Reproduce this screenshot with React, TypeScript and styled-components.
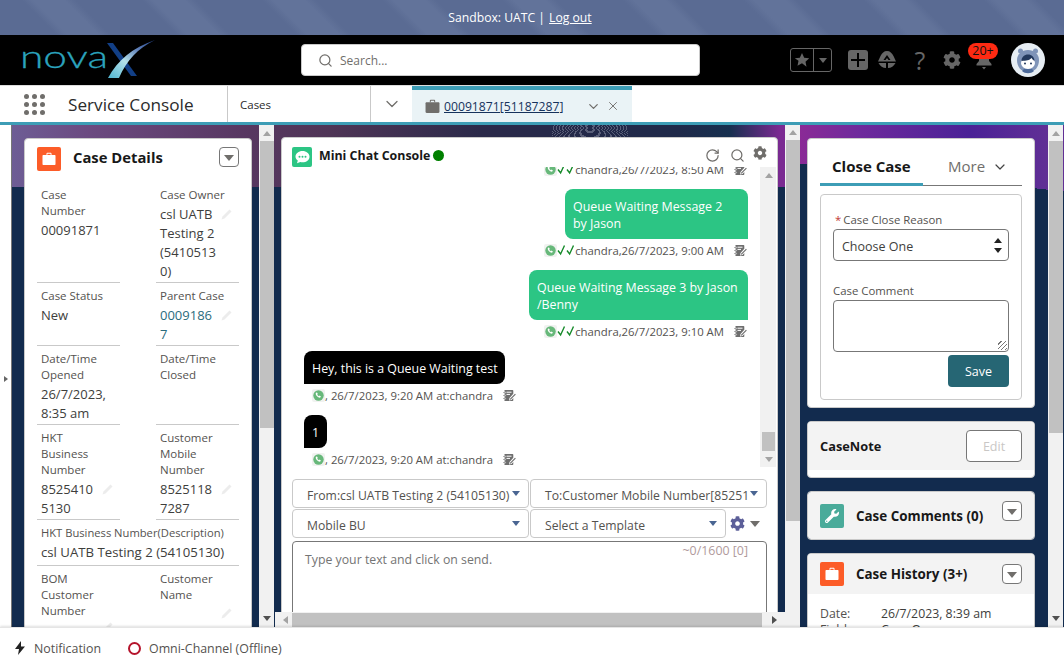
import React from 'react'
import styled, { createGlobalStyle } from 'styled-components'
import { FaCog, FaWrench } from 'react-icons/fa'
import { ChevronDown, RotateCw, Search, X } from 'lucide-react'

const FONT = `"Open Sans", "Noto Sans", "Liberation Sans", sans-serif`
const NAVY = '#122b4e'
const TEAL = '#3d9db6'

const Global = createGlobalStyle`
  * { box-sizing: border-box; }
  html, body { margin: 0; padding: 0; height: 100%; overflow: hidden; background: #fff; }
  body { font-family: ${FONT}; color: #3e3e3c; }
`

const Page = styled.div`
  display: flex;
  flex-direction: column;
  height: 668px;
  width: 1064px;
  overflow: hidden;
`

const Sandbox = styled.div`
  height: 35px;
  flex: none;
  display: flex;
  align-items: center;
  justify-content: center;
  gap: 4px;
  padding-right: 24px;
  color: #fff;
  font-size: 12.2px;
  background: repeating-linear-gradient(45deg, #5a6b93 0 40px, #62739a 48px 70px, #5a6b93 78px 85px);
  a { color: #fff; text-decoration: underline; }
`

const Header = styled.header`
  height: 50px;
  flex: none;
  background: #000;
  display: flex;
  align-items: center;
  padding: 0 19px 0 20px;
`

const Logo = styled.svg`
  width: 136px;
  height: 42px;
  flex: none;
`

const SearchBox = styled.div`
  width: 399px;
  height: 32px;
  margin-left: 145px;
  background: #fff;
  border: 1px solid #c9c9c9;
  border-radius: 4px;
  display: flex;
  align-items: center;
  gap: 7px;
  padding-left: 16px;
  color: #706e6b;
  font-size: 12px;
  flex: none;
`

const HeaderIcons = styled.div`
  display: flex;
  align-items: center;
  margin-left: 90px;
  flex: 1;
`

const Favorites = styled.div`
  width: 42px;
  height: 24px;
  border: 1px solid #666;
  border-radius: 3px;
  display: flex;
  flex: none;
  div { display: flex; align-items: center; justify-content: center; }
  div:first-child { width: 23px; border-right: 1px solid #666; }
  div:last-child { flex: 1; }
`

const PlusButton = styled.div`
  width: 20px;
  height: 20px;
  margin-left: 16px;
  background: #666;
  border-radius: 3px;
  display: flex;
  align-items: center;
  justify-content: center;
  flex: none;
`

const HeadIcon = styled.div<{ $ml: number }>`
  margin-left: ${p => p.$ml}px;
  display: flex;
  align-items: center;
  justify-content: center;
  position: relative;
  color: #666;
  flex: none;
`

const Help = styled.span`
  width: 14px;
  text-align: center;
  font-size: 25px;
  font-weight: 400;
  color: #666;
  line-height: 26px;
`

const Badge = styled.span`
  position: absolute;
  left: -6px;
  top: -8px;
  width: 30px;
  height: 16px;
  border-radius: 8px;
  background: #ff2a12;
  color: #111;
  font-size: 12.5px;
  line-height: 16px;
  text-align: center;
`

const Avatar = styled.svg`
  width: 34px;
  height: 34px;
  margin-left: 17px;
  flex: none;
`

const Nav = styled.nav`
  height: 40px;
  flex: none;
  display: flex;
  background: #fff;
  border-top: 1px solid #ddd;
  border-bottom: 3px solid ${TEAL};
`

const AppName = styled.div`
  width: 228px;
  height: 36px;
  display: flex;
  align-items: center;
  padding-left: 24px;
  gap: 23px;
  font-size: 17.2px;
  color: #2b2b2b;
  border-right: 1px solid #c9c9c9;
  flex: none;
`

const Launcher = styled.div`
  width: 21px;
  display: grid;
  grid-template-columns: repeat(3, 5px);
  gap: 3px;
  i { display: block; width: 5px; height: 5px; border-radius: 50%; background: #706e6b; }
`

const NavItem = styled.div`
  width: 143px;
  height: 36px;
  padding-left: 12px;
  display: flex;
  align-items: center;
  font-size: 11.5px;
  color: #2b2b2b;
  border-right: 1px solid #c9c9c9;
  flex: none;
`

const NavChevron = styled.div`
  width: 41px;
  height: 36px;
  display: flex;
  align-items: center;
  justify-content: center;
  color: #706e6b;
  flex: none;
`

const ActiveTab = styled.div`
  width: 220px;
  height: 36px;
  background: #eaf3f6;
  border-top: 4px solid ${TEAL};
  display: flex;
  align-items: center;
  padding-left: 13px;
  color: #706e6b;
  flex: none;
  a { margin-left: 4px; font-size: 12.2px; color: #16325c; text-decoration: underline; width: 142px; white-space: nowrap; }
  svg + svg { margin-left: 5px; }
`

const Workspace = styled.main`
  height: 502px;
  flex: none;
  display: flex;
  overflow: hidden;
  background:
    repeating-radial-gradient(ellipse 14px 4px at 38px 3px, rgba(225, 230, 240, .28) 0 1px, rgba(20, 30, 60, .12) 1px 3px) 552px 0 / 76px 13px no-repeat,
    linear-gradient(${NAVY}, ${NAVY}) 0 62px no-repeat,
    linear-gradient(90deg, #6e6098 0, #6b4a80 90px, #573760 250px, #4f3556 330px, #2b2a4a 480px, #1f2a4a 680px, #17304f 730px, #7b2a92 780px, #7b2a92 800px);
`

const SideToggle = styled.div`
  width: 12px;
  background: #fff;
  border-right: 1px solid #777;
  display: flex;
  align-items: center;
  padding-left: 4px;
  flex: none;
  &::after {
    content: '';
    border-left: 4px solid #666;
    border-top: 3px solid transparent;
    border-bottom: 3px solid transparent;
    margin-top: 6px;
  }
`

const LeftColumn = styled.section`
  width: 263px;
  padding: 13px 0 0 12px;
  display: flex;
  align-items: flex-start;
  overflow: hidden;
  flex: none;
`

const VTrack = styled.div<{ $ml: number }>`
  width: 15px;
  height: 502px;
  margin: -13px 0 0 ${p => p.$ml}px;
  background: #f1f1f1;
  display: flex;
  flex-direction: column;
  align-items: center;
  flex: none;
`

const UpArrow = styled.i`
  display: block;
  margin: 6px 0 5px;
  border-bottom: 5px solid #a3a3a3;
  border-left: 4px solid transparent;
  border-right: 4px solid transparent;
`

const DownArrow = styled.i`
  display: block;
  margin: auto 0 6px;
  border-top: 5px solid #505050;
  border-left: 4px solid transparent;
  border-right: 4px solid transparent;
`

const Thumb = styled.div<{ $h: number }>`
  width: 14px;
  height: ${p => p.$h}px;
  background: #c1c1c1;
`

const Card = styled.div<{ $w: number; $h?: number }>`
  width: ${p => p.$w}px;
  ${p => (p.$h ? `height: ${p.$h}px;` : '')}
  background: #fff;
  border-radius: 4px;
  border: 1px solid #c9c9c9;
  flex: none;
  overflow: hidden;
`

const CardIcon = styled.div<{ $bg: string }>`
  width: 24px;
  height: 24px;
  border-radius: 2px;
  background: ${p => p.$bg};
  display: flex;
  align-items: center;
  justify-content: center;
  color: #fff;
  flex: none;
`

const CardTitle = styled.h2<{ $size?: number }>`
  margin: 0 0 0 12px;
  height: 24px;
  font-size: ${p => p.$size ?? 14.8}px;
  line-height: 24px;
  font-weight: 700;
  color: #181818;
  flex: 1;
  white-space: nowrap;
`

const CardHead = styled.div`
  height: 43px;
  padding: 8px 12px 0;
  display: flex;
  align-items: flex-start;
  ${CardTitle} { margin-top: -2px; }
`

const MenuButton = styled.div`
  width: 20px;
  height: 20px;
  border: 1px solid #777;
  border-radius: 4px;
  background: #fff;
  display: flex;
  align-items: center;
  justify-content: center;
  flex: none;
  &::after {
    content: '';
    margin-top: 2px;
    border-top: 6px solid #706e6b;
    border-left: 5px solid transparent;
    border-right: 5px solid transparent;
  }
`

const FieldGrid = styled.div`
  display: grid;
  grid-template-columns: 83px 83px;
  column-gap: 36px;
  padding-left: 12px;
`

const Field = styled.div<{ $full?: boolean; $last?: boolean }>`
  position: relative;
  padding: 5px 0 ${p => (p.$full ? 3 : 1)}px 4px;
  border-bottom: ${p => (p.$last ? 'none' : '1px solid #c9c9c9')};
  ${p => (p.$full ? 'grid-column: 1 / 3;' : '')}
`

const Label = styled.div`
  font-size: 11.5px;
  line-height: 16px;
  color: #54524f;
  white-space: nowrap;
`

const WideLabel = styled(Label)`
  font-size: 11.2px;
`

const Value = styled.div<{ $link?: boolean }>`
  margin-top: 2px;
  font-size: 13px;
  line-height: 19px;
  color: ${p => (p.$link ? '#2b6c7d' : '#3e3e3c')};
  white-space: nowrap;
`

const WideValue = styled(Value)`
  font-size: 13.2px;
`

const Pencil = styled.svg<{ $top: number }>`
  position: absolute;
  right: 6px;
  top: ${p => p.$top}px;
  width: 13px;
  height: 13px;
`

const CenterColumn = styled.section`
  width: 525px;
  display: flex;
  flex-direction: column;
  flex: none;
`

const CenterMain = styled.div`
  height: 487px;
  padding: 12px 0 0 6px;
  display: flex;
  align-items: flex-start;
  overflow: hidden;
  flex: none;
`

const HScroll = styled.div`
  height: 15px;
  background: #f1f1f1;
  display: flex;
  align-items: center;
  flex: none;
  padding-left: 17px;
  &::before {
    content: '';
    border-right: 5px solid #a3a3a3;
    border-top: 4px solid transparent;
    border-bottom: 4px solid transparent;
    margin-left: -9px;
  }
  &::after {
    content: '';
    margin-left: 10px;
    border-left: 5px solid #505050;
    border-top: 4px solid transparent;
    border-bottom: 4px solid transparent;
  }
`

const HThumb = styled.div`
  width: 470px;
  height: 14px;
  margin-left: 4px;
  background: #c1c1c1;
`

const ChatHead = styled.div`
  height: 29px;
  padding: 9px 0 0 10px;
  display: flex;
  align-items: flex-start;
`

const ChatIcon = styled(CardIcon)`
  width: 20px;
  height: 20px;
`

const ChatTitle = styled.h2`
  margin: 0 0 0 7px;
  font-size: 12.4px;
  line-height: 18px;
  font-weight: 700;
  color: #181818;
  white-space: nowrap;
`

const OnlineDot = styled.i`
  display: block;
  width: 11px;
  height: 11px;
  margin: 3px 0 0 3px;
  border-radius: 50%;
  background: #008000;
`

const ChatTools = styled.div`
  margin-left: auto;
  padding: 1px 10px 0 0;
  display: flex;
  gap: 10px;
  color: #706e6b;
  svg:last-child { margin: -2px 0 0 -2px; }
`

const ChatBody = styled.div`
  height: 300px;
  display: flex;
`

const Messages = styled.div`
  width: 478px;
  height: 300px;
  display: flex;
  flex-direction: column;
  justify-content: flex-end;
  overflow: hidden;
  flex: none;
`

const Bubble = styled.div<{ $out?: boolean; $w: number }>`
  width: ${p => p.$w}px;
  padding: 9px 4px 7px 8px;
  font-size: 12.4px;
  line-height: 17px;
  color: #fff;
  flex: none;
  background: ${p => (p.$out ? '#2cc584' : '#000')};
  border-radius: ${p => (p.$out ? '8px 8px 0 8px' : '8px 8px 8px 0')};
  margin: ${p => (p.$out ? '12px 12px 0 auto' : '12px 0 0 22px')};
`

const Meta = styled.div<{ $out?: boolean }>`
  height: 16px;
  margin-top: 3px;
  display: flex;
  align-items: center;
  font-size: 11.35px;
  color: #54524f;
  white-space: nowrap;
  flex: none;
  justify-content: ${p => (p.$out ? 'flex-end' : 'flex-start')};
  padding: ${p => (p.$out ? '0 13px 0 0' : '0 0 0 30px')};
  span { margin-right: 10px; }
`

const ChatScroll = styled.div`
  width: 16px;
  height: 300px;
  background: #f1f1f1;
  display: flex;
  flex-direction: column;
  align-items: center;
  flex: none;
  padding-left: 1px;
`

const ChatThumb = styled.div`
  width: 13px;
  height: 19px;
  margin-top: auto;
  background: #c1c1c1;
`

const ChatDown = styled(DownArrow)`
  margin: 6px 0 5px;
  border-top-color: #a3a3a3;
`

const Composer = styled.div`
  padding: 12px 0 0 10px;
  width: 486px;
`

const SelectRow = styled.div`
  display: flex;
  align-items: center;
  gap: 1px;
  margin-bottom: 1px;
`

const ChatSelect = styled.div<{ $w: number }>`
  width: ${p => p.$w}px;
  height: 29px;
  border: 1px solid #c9c9c9;
  border-radius: 4px;
  padding: 3px 0 0 14px;
  display: flex;
  align-items: center;
  font-size: 12.2px;
  color: #54524f;
  white-space: nowrap;
  position: relative;
  flex: none;
  &::after {
    content: '';
    position: absolute;
    right: 8px;
    top: 11px;
    border-top: 5px solid #4a6592;
    border-left: 4px solid transparent;
    border-right: 4px solid transparent;
  }
`

const Caret = styled.i`
  display: block;
  margin-left: 5px;
  border-top: 6px solid #706e6b;
  border-left: 5px solid transparent;
  border-right: 5px solid transparent;
`

const GearWrap = styled.div`
  margin-left: 3px;
  display: flex;
  align-items: center;
  color: #5c5f99;
`

const TextBox = styled.div`
  width: 475px;
  height: 120px;
  margin-top: 3px;
  border: 1px solid #777;
  border-radius: 4px;
  padding: 9px 12px;
  font-size: 12.3px;
  line-height: 18px;
  color: #747474;
  position: relative;
`

const Counter = styled.span`
  position: absolute;
  right: 18px;
  top: 0;
  font-size: 12.4px;
  color: #b09a9c;
`

const RightColumn = styled.section`
  width: 264px;
  padding: 13px 0 0 7px;
  display: flex;
  align-items: flex-start;
  overflow: hidden;
  flex: none;
  background:
    linear-gradient(186deg, transparent 0 66px, ${NAVY} 66px),
    linear-gradient(90deg, #8a2a96 0, #6e2a9c 60px, #4a2296 170px, #612f95 250px);
`

const RightStack = styled.div`
  width: 228px;
  display: flex;
  flex-direction: column;
  gap: 13px;
  flex: none;
`

const TabStrip = styled.div`
  margin: 16px 12px 0;
  height: 31px;
  display: flex;
  border-bottom: 1px solid #777;
`

const ActiveTabLabel = styled.div`
  width: 103px;
  height: 31px;
  padding: 1px 0 0 12px;
  font-size: 15px;
  line-height: 20px;
  font-weight: 700;
  color: #181818;
  border-bottom: 3px solid ${TEAL};
  white-space: nowrap;
`

const MoreTab = styled.div`
  margin-left: 25px;
  padding-top: 1px;
  display: flex;
  align-items: flex-start;
  gap: 7px;
  font-size: 15px;
  line-height: 20px;
  color: #706e6b;
  svg { margin-top: 3px; color: #444; }
`

const CloseForm = styled.div`
  margin: 8px 12px 7px;
  height: 206px;
  border: 1px solid #c9c9c9;
  border-radius: 4px;
  padding: 16px 12px 0;
`

const FormLabel = styled.div<{ $mt?: number }>`
  margin: ${p => p.$mt ?? 0}px 0 1px;
  font-size: 11.4px;
  line-height: 17px;
  color: #54524f;
  b { color: #c23934; font-weight: 400; margin: 0 2px; }
`

const FormSelect = styled.div`
  width: 176px;
  height: 32px;
  border: 1px solid #777;
  border-radius: 4px;
  padding: 2px 0 0 8px;
  display: flex;
  align-items: center;
  font-size: 12.5px;
  color: #3e3e3c;
  position: relative;
`

const Spinner = styled.span`
  position: absolute;
  right: 6px;
  top: 8px;
  display: flex;
  flex-direction: column;
  gap: 5px;
  i { display: block; border-left: 4px solid transparent; border-right: 4px solid transparent; }
  i:first-child { border-bottom: 5px solid #222; }
  i:last-child { border-top: 5px solid #222; }
`

const FormText = styled.div`
  width: 176px;
  height: 52px;
  border: 1px solid #777;
  border-radius: 4px;
  position: relative;
  &::after {
    content: '';
    position: absolute;
    right: 1px;
    bottom: 1px;
    width: 9px;
    height: 9px;
    background: repeating-linear-gradient(135deg, transparent 0 2px, #777 2px 3px);
  }
`

const SaveButton = styled.div`
  width: 61px;
  height: 32px;
  margin: 3px 0 0 115px;
  border-radius: 4px;
  background: #266674;
  color: #fff;
  font-size: 12.5px;
  display: flex;
  align-items: center;
  justify-content: center;
`

const NoteCard = styled(Card)`
  height: 57px;
  padding-bottom: 8px;
`

const NoteHead = styled.div`
  height: 48px;
  background: #f3f3f3;
  display: flex;
  align-items: center;
  justify-content: space-between;
  padding: 0 12px;
  font-size: 12.8px;
  font-weight: 700;
  color: #181818;
`

const EditButton = styled.div`
  width: 56px;
  height: 32px;
  background: #fff;
  border: 1px solid #777;
  border-radius: 4px;
  color: #c9c7c5;
  font-size: 12.5px;
  font-weight: 400;
  display: flex;
  align-items: center;
  justify-content: center;
`

const GreyHead = styled.div<{ $h: number; $pt: number; $btn: number }>`
  height: ${p => p.$h}px;
  background: #f3f3f3;
  display: flex;
  align-items: flex-start;
  padding: ${p => p.$pt}px 12px 0;
  ${MenuButton} { margin-top: ${p => p.$btn}px; }
`

const HistoryBody = styled.div`
  padding: 12px 12px 0;
  font-size: 12.3px;
  line-height: 16px;
  color: #3e3e3c;
  white-space: nowrap;
`

const HistoryRow = styled.div`
  display: flex;
  span:first-child { width: 61px; color: #54524f; }
`

const FooterBar = styled.footer`
  height: 41px;
  flex: none;
  background: #fff;
  border-top: 1px solid #e5e5e5;
  box-shadow: 0 -1px 2px rgba(0, 0, 0, .12);
  display: flex;
  align-items: center;
  padding-left: 14px;
  font-size: 12.4px;
  color: #54524f;
  position: relative;
`

const FootItem = styled.div<{ $w: number }>`
  width: ${p => p.$w}px;
  display: flex;
  align-items: center;
  gap: 8px;
  flex: none;
`

const OfflineRing = styled.i`
  display: block;
  width: 13px;
  height: 13px;
  border: 2px solid #b5142c;
  border-radius: 50%;
`

function Briefcase({ size = 14, color = '#fff' }: { size?: number; color?: string }) {
  return (
    <svg width={size} height={size} viewBox="0 0 14 14" fill={color}>
      <path d="M4.5 3V1.8C4.5 1.1 5 .8 5.6.8h2.8c.6 0 1.1.3 1.1 1V3H8.6V1.9a.2.2 0 0 0-.2-.2H5.6a.2.2 0 0 0-.2.2V3z" />
      <path d="M1.5 3h11c.6 0 1 .4 1 1v8c0 .6-.4 1-1 1h-11c-.6 0-1-.4-1-1V4c0-.6.4-1 1-1z" />
    </svg>
  )
}

function Whatsapp() {
  return (
    <svg width="13" height="13" viewBox="0 0 13 13">
      <rect width="13" height="13" rx="2" fill="#f0f2f0" />
      <circle cx="6.5" cy="6.5" r="5.2" fill="#67b87a" />
      <path d="M4 3.8c-.6.8-.3 2.2 1 3.5s2.7 1.7 3.5 1l.4-.9-1.4-.8-.6.6c-.8-.3-1.3-.9-1.7-1.7l.6-.6-.8-1.4z" fill="#fff" />
    </svg>
  )
}

function Ticks() {
  return (
    <svg width="18" height="12" viewBox="0 0 18 12" fill="none" stroke="#168a2a" strokeWidth="1.4">
      <path d="M1 6.5l2.6 3.5L7.5 1.5M10 6.5l2.6 3.5 3.9-8.5" />
    </svg>
  )
}

function NoteIcon() {
  return (
    <svg width="13" height="13" viewBox="0 0 13 13" fill="#6e6e6e">
      <path d="M1.5 1h8c.5 0 .8.3.8.8v3L6.5 9 6 11.5l2.5-.6 1.8-1.9v2.2c0 .5-.3.8-.8.8h-8z" />
      <path d="M0 3h2.6v1H0zM0 6h2.6v1H0zM0 9h2.6v1H0z" stroke="#fff" strokeWidth=".4" />
      <path d="M3.5 3.2h5M3.5 5.4h3.5" stroke="#fff" strokeWidth="1" />
      <path d="M12 4.8l.8.8-5 5-1 .2.2-1z" />
    </svg>
  )
}

function EditPencil({ top }: { top: number }) {
  return (
    <Pencil $top={top} viewBox="0 0 13 13" fill="#ececec">
      <path d="M9.5 1.5l2 2-7 7-3 1 1-3z" />
    </Pencil>
  )
}

function OutMeta({ time }: { time: string }) {
  return (
    <Meta $out>
      <Whatsapp />
      <Ticks />
      <span>{`chandra,26/7/2023, ${time}`}</span>
      <NoteIcon />
    </Meta>
  )
}

function InMeta() {
  return (
    <Meta>
      <Whatsapp />
      <span>, 26/7/2023, 9:20 AM at:chandra</span>
      <NoteIcon />
    </Meta>
  )
}

export default function App() {
  return (
    <Page>
      <Global />
      <Sandbox>
        Sandbox: UATC | <a>Log out</a>
      </Sandbox>

      <Header>
        <Logo viewBox="0 0 136 42">
          <defs>
            <linearGradient id="swoosh" x1="0" y1="1" x2="1" y2="0">
              <stop offset="0" stopColor="#4fb4cf" />
              <stop offset=".4" stopColor="#b5e2ea" />
              <stop offset=".7" stopColor="#5f7fb8" />
              <stop offset="1" stopColor="#1d3f86" />
            </linearGradient>
          </defs>
          <text x="0" y="29" fontFamily="Lato, sans-serif" fontWeight="300" fontSize="32" fill="#2ba3bd" stroke="#2ba3bd" strokeWidth=".3" textLength="88" lengthAdjust="spacingAndGlyphs">
            nova
          </text>
          <path d="M87 4h6l24 33h-6z" fill="#123f86" />
          <path d="M88 39c10-18 24-30 47-38-18 9-28 20-36 38z" fill="url(#swoosh)" />
        </Logo>
        <SearchBox>
          <Search size={15} color="#706e6b" strokeWidth={2} />
          Search...
        </SearchBox>
        <HeaderIcons>
          <Favorites>
            <div>
              <svg width="16" height="16" viewBox="0 0 16 16" fill="#666">
                <path d="M8 1l2.2 4.7 5 .6-3.7 3.4 1 5L8 11.3l-4.5 2.5 1-5L.8 6.3l5-.6z" />
              </svg>
            </div>
            <div>
              <svg width="8" height="5" viewBox="0 0 8 5" fill="#666">
                <path d="M0 0h8L4 5z" />
              </svg>
            </div>
          </Favorites>
          <PlusButton>
            <svg width="14" height="14" viewBox="0 0 14 14" fill="#000">
              <path d="M6 0h2v6h6v2H8v6H6V8H0V6h6z" />
            </svg>
          </PlusButton>
          <HeadIcon $ml={9}>
            <svg width="20" height="20" viewBox="0 0 20 20" fill="#666">
              <path d="M10 1c3 0 5 2 6.5 5L19 11.5H1L3.500 6C5 3 7 1 10 1zm0 4L6.500 10h2L10 8l1.500 2h2z" fillRule="evenodd" />
              <path d="M1.500 13h7.500v5C6 18 3 16 1.500 13zM11 13h7.500c-1.500 3-4.500 5-7.500 5z" />
            </svg>
          </HeadIcon>
          <HeadIcon $ml={16}>
            <Help>?</Help>
          </HeadIcon>
          <HeadIcon $ml={16}>
            <FaCog size={18} />
          </HeadIcon>
          <HeadIcon $ml={13}>
            <svg width="20" height="19" viewBox="0 0 20 19" fill="#666">
              <path d="M10 1c3 0 5 2.200 5 5.500V10l2.500 3v1.500h-15V13L5 10V6.500C5 3.200 7 1 10 1zM8 16h4l-2 2.500z" />
            </svg>
            <Badge>20+</Badge>
          </HeadIcon>
          <Avatar viewBox="0 0 34 34">
            <circle cx="17" cy="17" r="17" fill="#e6edf3" />
            <circle cx="9.500" cy="8" r="2.500" fill="#7f94b8" />
            <circle cx="24.500" cy="8" r="2.500" fill="#7f94b8" />
            <path d="M6 17c0-6 5-10 11-10s11 4 11 10c0 7-4 12-11 12S6 24 6 17z" fill="#7f94b8" />
            <ellipse cx="17" cy="20" rx="7" ry="6" fill="#fff" />
            <path d="M10.500 18c0-4 3-6.500 6.500-6.500s6.500 2.500 6.500 6.500c-1.500-.8-2.500-2-3-3.200-1 1.500-2.500 2.500-4 2.500-1.500.5-3.500.5-6 .7z" fill="#243a5e" />
            <circle cx="14" cy="20.500" r="1" fill="#243a5e" />
            <circle cx="20" cy="20.500" r="1" fill="#243a5e" />
            <path d="M11 28c3 3 9 3 12 0l-2-2h-8z" fill="#4d6a9a" />
          </Avatar>
        </HeaderIcons>
      </Header>

      <Nav>
        <AppName>
          <Launcher>
            {Array.from({ length: 9 }).map((_, i) => (
              <i key={i} />
            ))}
          </Launcher>
          Service Console
        </AppName>
        <NavItem>Cases</NavItem>
        <NavChevron>
          <ChevronDown size={20} strokeWidth={1.5} />
        </NavChevron>
        <ActiveTab>
          <Briefcase size={15} color="#706e6b" />
          <a>00091871[51187287]</a>
          <ChevronDown size={15} strokeWidth={2} />
          <X size={14} strokeWidth={1.6} />
        </ActiveTab>
      </Nav>

      <Workspace>
        <SideToggle />
        <LeftColumn>
          <Card $w={228} $h={520}>
            <CardHead>
              <CardIcon $bg="#fc5c28">
                <Briefcase />
              </CardIcon>
              <CardTitle>Case Details</CardTitle>
              <MenuButton />
            </CardHead>
            <FieldGrid>
              <Field>
                <Label>Case<br />Number</Label>
                <Value>00091871</Value>
              </Field>
              <Field>
                <Label>Case Owner</Label>
                <Value>csl UATB<br />Testing 2<br />(5410513<br />0)</Value>
                <EditPencil top={26} />
              </Field>
              <Field>
                <Label>Case Status</Label>
                <Value>New</Value>
              </Field>
              <Field>
                <Label>Parent Case</Label>
                <Value $link>0009186<br />7</Value>
                <EditPencil top={26} />
              </Field>
              <Field>
                <Label>Date/Time<br />Opened</Label>
                <Value>26/7/2023,<br />8:35 am</Value>
              </Field>
              <Field>
                <Label>Date/Time<br />Closed</Label>
              </Field>
              <Field>
                <Label>HKT<br />Business<br />Number</Label>
                <Value>8525410<br />5130</Value>
                <EditPencil top={58} />
              </Field>
              <Field>
                <Label>Customer<br />Mobile<br />Number</Label>
                <Value>8525118<br />7287</Value>
                <EditPencil top={58} />
              </Field>
              <Field $full>
                <WideLabel>HKT Business Number(Description)</WideLabel>
                <WideValue>csl UATB Testing 2 (54105130)</WideValue>
              </Field>
              <Field $last>
                <Label>BOM<br />Customer<br />Number</Label>
                <EditPencil top={55} />
              </Field>
              <Field $last>
                <Label>Customer<br />Name</Label>
                <EditPencil top={41} />
              </Field>
            </FieldGrid>
          </Card>
          <VTrack $ml={7}>
            <UpArrow />
            <Thumb $h={287} />
            <DownArrow />
          </VTrack>
        </LeftColumn>

        <CenterColumn>
          <CenterMain>
            <Card $w={497} $h={520}>
              <ChatHead>
                <ChatIcon $bg="#2cc584">
                  <svg width="15" height="14" viewBox="0 0 15 14" fill="#fff">
                    <path d="M7.500 1C11.400 1 14.500 3.500 14.500 6.700s-3.100 5.600-7 5.600c-.8 0-1.500-.1-2.200-.3L2 13.300l.8-2.700C1.300 9.500.5 8.200.5 6.700.5 3.500 3.600 1 7.500 1z" />
                    <circle cx="4.500" cy="6.700" r="1" fill="#2cc584" />
                    <circle cx="7.500" cy="6.700" r="1" fill="#2cc584" />
                    <circle cx="10.500" cy="6.700" r="1" fill="#2cc584" />
                  </svg>
                </ChatIcon>
                <ChatTitle>Mini Chat Console</ChatTitle>
                <OnlineDot />
                <ChatTools>
                  <RotateCw size={15} strokeWidth={2} />
                  <Search size={15} strokeWidth={2} />
                  <FaCog size={14} />
                </ChatTools>
              </ChatHead>
              <ChatBody>
                <Messages>
                  <OutMeta time="8:50 AM" />
                  <Bubble $out $w={183}>Queue Waiting Message 2<br />by Jason</Bubble>
                  <OutMeta time="9:00 AM" />
                  <Bubble $out $w={219}>Queue Waiting Message 3 by Jason<br />/Benny</Bubble>
                  <OutMeta time="9:10 AM" />
                  <Bubble $w={201}>Hey, this is a Queue Waiting test</Bubble>
                  <InMeta />
                  <Bubble $w={23}>1</Bubble>
                  <InMeta />
                </Messages>
                <ChatScroll>
                  <UpArrow />
                  <ChatThumb />
                  <ChatDown />
                </ChatScroll>
              </ChatBody>
              <Composer>
                <SelectRow>
                  <ChatSelect $w={237}>From:csl UATB Testing 2 (54105130)</ChatSelect>
                  <ChatSelect $w={237}>To:Customer Mobile Number[85251</ChatSelect>
                </SelectRow>
                <SelectRow>
                  <ChatSelect $w={237}>Mobile BU</ChatSelect>
                  <ChatSelect $w={196}>Select a Template</ChatSelect>
                  <GearWrap>
                    <FaCog size={15} />
                    <Caret />
                  </GearWrap>
                </SelectRow>
                <TextBox>
                  Type your text and click on send.
                  <Counter>~0/1600 [0]</Counter>
                </TextBox>
              </Composer>
            </Card>
            <VTrack $ml={7}>
              <UpArrow />
              <Thumb $h={381} />
              <DownArrow />
            </VTrack>
          </CenterMain>
          <HScroll>
            <HThumb />
          </HScroll>
        </CenterColumn>

        <RightColumn>
          <RightStack>
            <Card $w={228} $h={270}>
              <TabStrip>
                <ActiveTabLabel>Close Case</ActiveTabLabel>
                <MoreTab>
                  More
                  <ChevronDown size={16} strokeWidth={1.8} />
                </MoreTab>
              </TabStrip>
              <CloseForm>
                <FormLabel>
                  <b>*</b>Case Close Reason
                </FormLabel>
                <FormSelect>
                  Choose One
                  <Spinner>
                    <i />
                    <i />
                  </Spinner>
                </FormSelect>
                <FormLabel $mt={21}>Case Comment</FormLabel>
                <FormText />
                <SaveButton>Save</SaveButton>
              </CloseForm>
            </Card>
            <NoteCard $w={228}>
              <NoteHead>
                CaseNote
                <EditButton>Edit</EditButton>
              </NoteHead>
            </NoteCard>
            <Card $w={228}>
              <GreyHead $h={47} $pt={12} $btn={-3}>
                <CardIcon $bg="#4aab9a">
                  <FaWrench size={14} />
                </CardIcon>
                <CardTitle $size={13.4}>Case Comments (0)</CardTitle>
                <MenuButton />
              </GreyHead>
            </Card>
            <Card $w={228} $h={120}>
              <GreyHead $h={40} $pt={8} $btn={2}>
                <CardIcon $bg="#fc5c28">
                  <Briefcase />
                </CardIcon>
                <CardTitle $size={13.4}>Case History (3+)</CardTitle>
                <MenuButton />
              </GreyHead>
              <HistoryBody>
                <HistoryRow>
                  <span>Date:</span>
                  <span>26/7/2023, 8:39 am</span>
                </HistoryRow>
                <HistoryRow>
                  <span>Field:</span>
                  <span>Case Owner</span>
                </HistoryRow>
              </HistoryBody>
            </Card>
          </RightStack>
          <VTrack $ml={13}>
            <UpArrow />
            <Thumb $h={292} />
            <DownArrow />
          </VTrack>
        </RightColumn>
      </Workspace>

      <FooterBar>
        <FootItem $w={114}>
          <svg width="12" height="14" viewBox="0 0 12 14" fill="#222">
            <path d="M7 0L1 8h4l-1 6 7-8.500H7z" />
          </svg>
          Notification
        </FootItem>
        <FootItem $w={170}>
          <OfflineRing />
          Omni-Channel (Offline)
        </FootItem>
      </FooterBar>
    </Page>
  )
}
